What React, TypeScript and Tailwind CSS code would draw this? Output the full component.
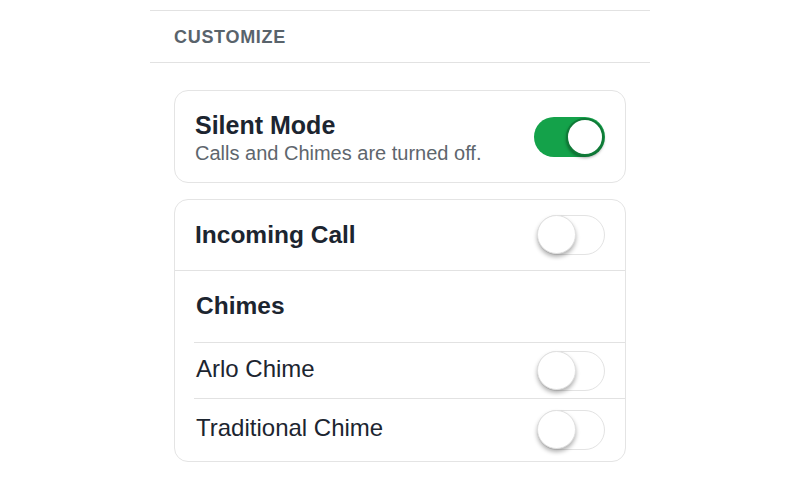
import React from "react";

function Toggle({ on }: { on: boolean }) {
  if (on) {
    return (
      <div className="relative h-[40px] w-[71px] rounded-full bg-[#14a24a]">
        <div className="absolute right-[1px] top-[1px] h-[38px] w-[38px] rounded-full border-[2px] border-[#0f7a37] bg-white shadow-[0_2px_3px_rgba(0,0,0,0.35)]" />
      </div>
    );
  }
  return (
    <div className="relative h-[40px] w-[68px] rounded-full border-[1.5px] border-[#e3e3e3] bg-white">
      <div className="absolute left-[-1px] top-[-1px] h-[39px] w-[39px] rounded-full border border-[#e0e0e0] bg-white shadow-[0_3px_4px_rgba(0,0,0,0.3)]" />
    </div>
  );
}

export default function App() {
  return (
    <div
      className="min-h-[500px] w-full bg-white pt-[10px]"
      style={{ fontFamily: '"Liberation Sans", Arial, sans-serif' }}
    >
      <div className="mx-auto w-[500px]">
        <div className="flex h-[53px] items-center border-y border-[#e2e2e2] px-6">
          <span className="pt-[1px] text-[18px] font-bold tracking-[0.7px] text-[#59636b]">CUSTOMIZE</span>
        </div>
        <div className="flex flex-col gap-4 px-6 pt-[27px]">
          <div className="flex h-[93px] items-center justify-between rounded-[14px] border-[1.5px] border-[#e4e4e4] pl-5 pr-[20px]">
            <div className="flex flex-col pt-[3px]">
              <span className="text-[25px] font-bold leading-[30px] text-[#1c2530]">Silent Mode</span>
              <span className="text-[20px] leading-[26px] text-[#5e666d]">Calls and Chimes are turned off.</span>
            </div>
            <Toggle on />
          </div>
          <div className="flex flex-col rounded-[14px] border-[1.5px] border-[#e4e4e4]">
            <div className="flex h-[71px] items-center justify-between border-b border-[#e2e2e2] pl-5 pr-[20px]">
              <span className="text-[24.5px] font-bold text-[#1c2530]">Incoming Call</span>
              <Toggle on={false} />
            </div>
            <div className="flex h-[71px] items-center pl-[21px]">
              <span className="text-[24.5px] font-bold text-[#1c2530]">Chimes</span>
            </div>
            <div className="ml-[19px] flex flex-col">
              <div className="flex h-[56px] items-center justify-between border-t border-[#e2e2e2] pl-[2px] pr-[20px]">
                <span className="pb-[4px] text-[24px] text-[#1c2530]">Arlo Chime</span>
                <Toggle on={false} />
              </div>
              <div className="flex h-[63px] items-center justify-between border-t border-[#e2e2e2] pl-[2px] pr-[20px]">
                <span className="pb-[4px] text-[24px] text-[#1c2530]">Traditional Chime</span>
                <Toggle on={false} />
              </div>
            </div>
          </div>
        </div>
      </div>
    </div>
  );
}
